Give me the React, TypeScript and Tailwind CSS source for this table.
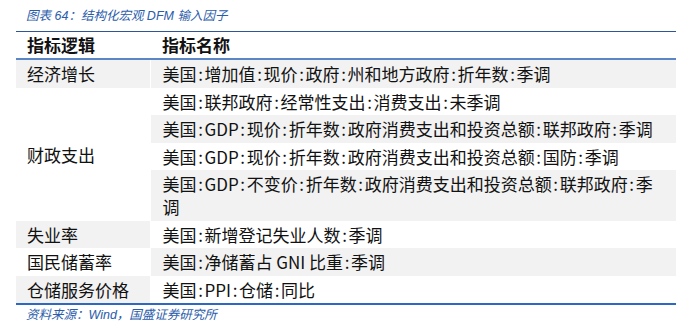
import React from 'react'

const FONT = '"Liberation Sans", "Noto Sans CJK SC", sans-serif'
const BODY = '"Noto Sans CJK SC", sans-serif'

// SimSun-style half-width colon: give it a fixed advance
function Txt({ text }: { text: string }) {
  const parts = text.split(':')
  return (
    <>
      {parts.map((p, i) => (
        <React.Fragment key={i}>
          {p}
          {i < parts.length - 1 && <span className="inline-block w-[8px] text-center">:</span>}
        </React.Fragment>
      ))}
    </>
  )
}

interface Row {
  logic?: string
  span?: number
  name: string
  logicBg?: boolean
  nameBg?: boolean
}

const rows: Row[] = [
  { logic: '经济增长', name: '美国:增加值:现价:政府:州和地方政府:折年数:季调', logicBg: true, nameBg: true },
  { logic: '财政支出', span: 4, name: '美国:联邦政府:经常性支出:消费支出:未季调' },
  { name: '美国:GDP:现价:折年数:政府消费支出和投资总额:联邦政府:季调', nameBg: true },
  { name: '美国:GDP:现价:折年数:政府消费支出和投资总额:国防:季调' },
  { name: '美国:GDP:不变价:折年数:政府消费支出和投资总额:联邦政府:季调', nameBg: true },
  { logic: '失业率', name: '美国:新增登记失业人数:季调', logicBg: true },
  { logic: '国民储蓄率', name: '美国:净储蓄占 GNI 比重:季调', nameBg: true },
  { logic: '仓储服务价格', name: '美国:PPI:仓储:同比', logicBg: true },
]

export default function App() {
  return (
    <div className="w-[692px] h-[332px] bg-white px-[16px] pt-[6px]" style={{ fontFamily: BODY }}>
      <div
        className="pl-[10px] text-[12.5px] leading-[20px] italic text-[#2a5caa] mb-[5px]"
        style={{ fontFamily: FONT }}
      >
        图表 64：结构化宏观 DFM 输入因子
      </div>

      <table className="w-[660px] border-collapse text-[17px] text-[#111]">
        <thead>
          <tr className="border-t border-[#2f5597] border-b-2 border-b-[#5b86c5]">
            <th className="w-[134px] text-left font-bold pl-[11px] leading-[24px] py-[1px]">指标逻辑</th>
            <th className="text-left font-bold pl-[12px] leading-[24px] py-[1px]">指标名称</th>
          </tr>
        </thead>
        <tbody className="border-b-2 border-b-[#2e68c0]">
          {rows.map((r, i) => (
            <tr key={i}>
              {r.logic && (
                <td
                  rowSpan={r.span}
                  className={`pl-[11px] leading-[23px] py-[2.25px] align-middle ${r.logicBg ? 'bg-[#f2f2f2]' : 'bg-white'}`}
                >
                  {r.logic}
                </td>
              )}
              <td
                className={`pl-[12px] pr-[12px] leading-[23px] py-[2.25px] border-l border-white ${r.nameBg ? 'bg-[#f2f2f2]' : 'bg-white'}`}
              >
                <Txt text={r.name} />
              </td>
            </tr>
          ))}
        </tbody>
      </table>

      <div
        className="pl-[10px] mt-[1px] text-[12.5px] leading-[18px] italic text-[#2a5caa]"
        style={{ fontFamily: FONT }}
      >
        资料来源：Wind，国盛证券研究所
      </div>
    </div>
  )
}
